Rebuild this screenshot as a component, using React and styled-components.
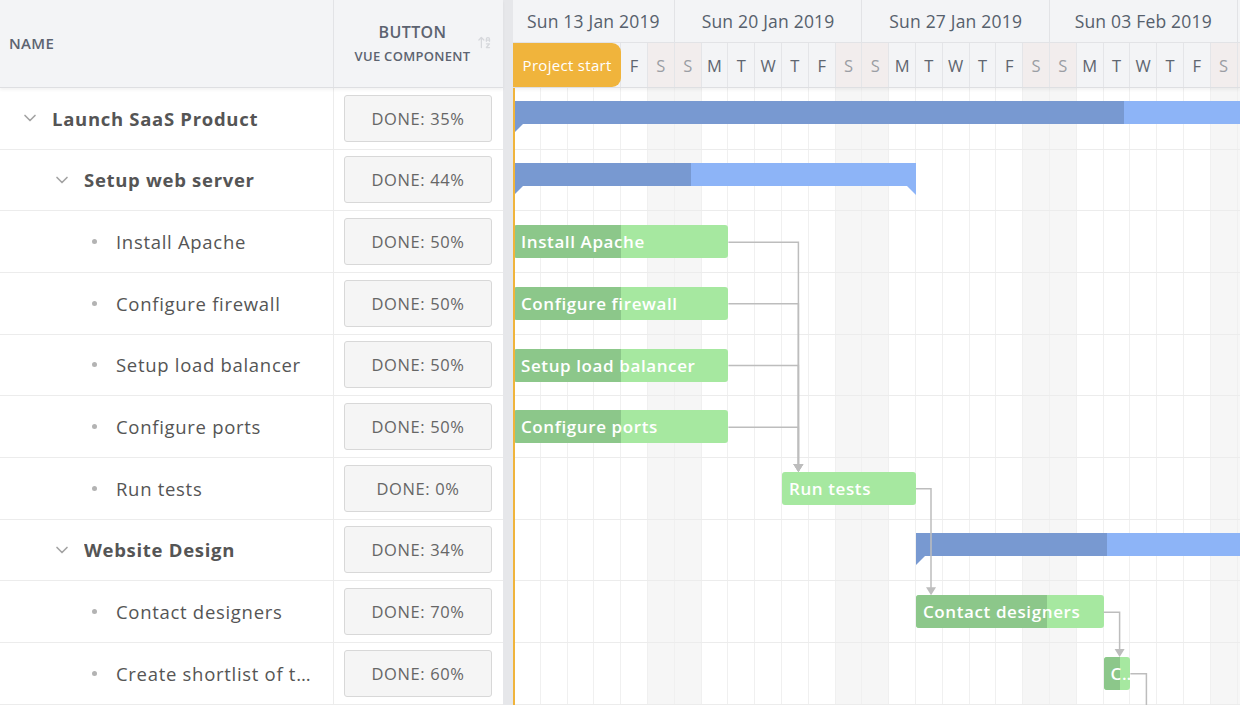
import React from 'react';
import styled, { createGlobalStyle } from 'styled-components';
import { ChevronDown, ArrowUpAZ } from 'lucide-react';

const DAY = 26.8;
const ORIGIN = 1;
const ROW_H = 61.67;
const START_DAYS = 4;

const rows = [
  { name: 'Launch SaaS Product', level: 0, parent: true, done: 35, start: 0, len: 65 },
  { name: 'Setup web server', level: 1, parent: true, done: 44, start: 0, len: 15 },
  { name: 'Install Apache', level: 2, done: 50, start: 0, len: 8 },
  { name: 'Configure firewall', level: 2, done: 50, start: 0, len: 8 },
  { name: 'Setup load balancer', level: 2, done: 50, start: 0, len: 8 },
  { name: 'Configure ports', level: 2, done: 50, start: 0, len: 8 },
  { name: 'Run tests', level: 2, done: 0, start: 10, len: 5 },
  { name: 'Website Design', level: 1, parent: true, done: 34, start: 15, len: 21 },
  { name: 'Contact designers', level: 2, done: 70, start: 15, len: 7 },
  { name: 'Create shortlist of three designers', level: 2, done: 60, start: 22, len: 1 },
];

const weeks = [
  { label: 'Sun 13 Jan 2019', width: ORIGIN + 6 * DAY },
  { label: 'Sun 20 Jan 2019', width: 7 * DAY },
  { label: 'Sun 27 Jan 2019', width: 7 * DAY },
  { label: 'Sun 03 Feb 2019', width: 7 * DAY },
];

const letters = ['M', 'T', 'W', 'T', 'F', 'S', 'S'];
const days = Array.from({ length: 28 }, (_, i) => ({
  letter: letters[i % 7],
  weekend: i % 7 >= 5,
}));

const x = (d) => ORIGIN + d * DAY;
const rowMid = (i) => i * ROW_H + ROW_H / 2;

const GlobalStyle = createGlobalStyle`
  html, body {
    margin: 0;
    padding: 0;
    overflow: hidden;
    background: #fff;
  }
  body {
    font-family: "Open Sans", "Noto Sans", sans-serif;
  }
  * { box-sizing: border-box; }
`;

const Page = styled.div`
  display: flex;
  width: 1240px;
  height: 705px;
  overflow: hidden;
  background: #fff;
`;

const Grid = styled.div`
  width: 503px;
  flex-shrink: 0;
  display: flex;
  flex-direction: column;
`;

const GridHeader = styled.div`
  height: 88px;
  display: flex;
  background: #f3f4f6;
  border-bottom: 1px solid #dedfe2;
  box-shadow: 0 2px 3px rgba(0, 0, 0, 0.05);
  position: relative;
  z-index: 2;
`;

const HeadCell = styled.div`
  width: ${(p) => p.$w}px;
  flex-shrink: 0;
  display: flex;
  flex-direction: column;
  justify-content: center;
  align-items: ${(p) => (p.$center ? 'center' : 'flex-start')};
  padding-left: ${(p) => (p.$center ? 0 : 9)}px;
  padding-right: ${(p) => (p.$center ? 12 : 0)}px;
  border-right: ${(p) => (p.$divider ? '1px solid #e2e3e6' : 'none')};
  color: #5c6370;
  font-weight: 600;
  text-transform: uppercase;
  position: relative;
`;

const HeadTitle = styled.span`
  font-size: ${(p) => p.$size}px;
  letter-spacing: ${(p) => p.$ls || 0}px;
  line-height: 1;
  margin: ${(p) => p.$gap || 0}px 0 0;
`;

const SortIcon = styled.div`
  position: absolute;
  right: 11px;
  top: 35px;
  color: #d6d8dc;
  display: flex;
`;

const GridRow = styled.div`
  height: ${ROW_H}px;
  display: flex;
  border-bottom: 1px solid #ececec;
`;

const NameCell = styled.div`
  width: 334px;
  flex-shrink: 0;
  display: flex;
  align-items: center;
  gap: 12px;
  padding-left: ${(p) => 20 + p.$level * 32}px;
  padding-right: 14px;
  border-right: 1px solid #ececec;
  min-width: 0;
`;

const TreeIcon = styled.div`
  width: 20px;
  flex-shrink: 0;
  display: flex;
  justify-content: center;
  align-items: center;
  color: #a3a3a3;
`;

const Dot = styled.span`
  width: 5px;
  height: 5px;
  border-radius: 50%;
  background: #b3b3b3;
`;

const NameText = styled.span`
  font-size: 18.5px;
  letter-spacing: 0.7px;
  font-weight: ${(p) => (p.$bold ? 700 : 400)};
  color: #555;
  white-space: nowrap;
  overflow: hidden;
  text-overflow: ellipsis;
  min-width: 0;
`;

const ButtonCell = styled.div`
  flex: 1;
  display: flex;
  align-items: center;
  padding: 0 11px 0 10px;
`;

const DoneButton = styled.button`
  width: 100%;
  height: 47px;
  background: #f5f5f5;
  border: 1px solid #d8d8d8;
  border-radius: 3px;
  font-family: inherit;
  font-size: 16.5px;
  letter-spacing: 0.6px;
  color: #666;
  cursor: pointer;
`;

const Splitter = styled.div`
  width: 10px;
  flex-shrink: 0;
  background: #e6e7ea;
`;

const Timeline = styled.div`
  flex: 1;
  min-width: 0;
  display: flex;
  flex-direction: column;
  overflow: hidden;
`;

const TimeHeader = styled.div`
  height: 88px;
  flex-shrink: 0;
  background: #f3f4f6;
  border-bottom: 1px solid #dedfe2;
  box-shadow: 0 2px 3px rgba(0, 0, 0, 0.05);
  display: flex;
  flex-direction: column;
  position: relative;
  z-index: 2;
`;

const WeekRow = styled.div`
  height: 43px;
  display: flex;
  border-bottom: 1px solid #e2e3e6;
`;

const WeekCell = styled.div`
  width: ${(p) => p.$w}px;
  flex-shrink: 0;
  display: flex;
  align-items: center;
  justify-content: center;
  border-right: 1px solid #e2e3e6;
  font-size: 17.5px;
  letter-spacing: 0.2px;
  font-weight: 500;
  color: #56606c;
  white-space: nowrap;
`;

const DayRow = styled.div`
  flex: 1;
  display: flex;
  position: relative;
`;

const DayCell = styled.div`
  width: ${(p) => p.$w}px;
  flex-shrink: 0;
  display: flex;
  align-items: center;
  justify-content: center;
  border-right: 1px solid #e4e5e8;
  background: ${(p) => (p.$weekend ? '#f2eded' : 'transparent')};
  color: ${(p) => (p.$weekend ? '#9b9ea4' : '#5f6670')};
  font-size: 16.5px;
  font-weight: 500;
`;

const ProjectStart = styled.div`
  position: absolute;
  left: 0;
  top: 0;
  bottom: 0;
  width: ${ORIGIN + START_DAYS * DAY}px;
  background: #f0b43c;
  border-radius: 0 9px 9px 0;
  color: #fff;
  font-size: 15px;
  letter-spacing: 0.3px;
  font-weight: 500;
  display: flex;
  align-items: center;
  justify-content: center;
`;

const TimeBody = styled.div`
  flex: 1;
  position: relative;
`;

const Columns = styled.div`
  position: absolute;
  inset: 0;
  display: flex;
`;

const DayCol = styled.div`
  width: ${(p) => p.$w}px;
  flex-shrink: 0;
  border-right: 1px solid #f0f0f0;
  background: ${(p) => (p.$weekend ? '#f6f6f6' : 'transparent')};
`;

const TimeRow = styled.div`
  height: ${ROW_H}px;
  border-bottom: 1px solid #ececec;
  position: relative;
`;

const SummaryBar = styled.div`
  position: absolute;
  top: 13px;
  height: 23px;
  background: #8db4f7;
  overflow: visible;
`;

const SummaryDone = styled.div`
  height: 100%;
  background: #7899d1;
`;

const Flag = styled.div`
  position: absolute;
  top: 23px;
  width: 0;
  height: 0;
  border-style: solid;
  ${(p) =>
    p.$side === 'left'
      ? `left: 0; border-width: 9px 9px 0 0; border-color: ${p.$color} transparent transparent transparent;`
      : `right: 0; border-width: 0 9px 9px 0; border-color: transparent ${p.$color} transparent transparent;`}
`;

const TaskBar = styled.div`
  position: absolute;
  top: 14px;
  height: 33px;
  border-radius: 3px;
  background: #a6e8a0;
  overflow: hidden;
`;

const TaskDone = styled.div`
  position: absolute;
  left: 0;
  top: 0;
  bottom: 0;
  background: #8cc78a;
`;

const TaskLabel = styled.span`
  position: relative;
  display: block;
  padding: 0 1px 0 7px;
  line-height: 33px;
  color: #fff;
  font-size: 17px;
  letter-spacing: 0.6px;
  font-weight: 600;
  white-space: nowrap;
  overflow: hidden;
  text-overflow: ellipsis;
`;

const StartLine = styled.div`
  position: absolute;
  left: 0;
  top: 0;
  bottom: 0;
  width: 2px;
  background: #f0b43c;
  z-index: 3;
`;

const Deps = styled.svg`
  position: absolute;
  left: 0;
  top: 0;
  width: 100%;
  height: 100%;
  pointer-events: none;
  overflow: visible;
`;

function Dependency({ from, to, stub = 15 }) {
  const a = rows[from];
  const x1 = x(a.start + a.len);
  const y1 = rowMid(from);
  const x2 = x1 + stub;
  const tipY = to * ROW_H + 14;
  const d = `M${x1} ${y1} H${x2} V${tipY - 7}`;
  return (
    <g>
      <path d={d} fill="none" stroke="#bdbdbd" strokeWidth="1.5" />
      <polygon points={`${x2 - 5},${tipY - 8} ${x2 + 5},${tipY - 8} ${x2},${tipY}`} fill="#bdbdbd" />
    </g>
  );
}

export default function App() {
  return (
    <>
      <GlobalStyle />
      <Page>
        <Grid>
          <GridHeader>
            <HeadCell $w={334} $divider>
              <HeadTitle $size={15} $ls={0.3}>Name</HeadTitle>
            </HeadCell>
            <HeadCell $w={169} $center>
              <HeadTitle $size={16} $ls={0.4}>Button</HeadTitle>
              <HeadTitle $size={13} $ls={0.3} $gap={10}>Vue Component</HeadTitle>
              <SortIcon>
                <ArrowUpAZ size={15} strokeWidth={2} />
              </SortIcon>
            </HeadCell>
          </GridHeader>
          {rows.map((r) => (
            <GridRow key={r.name}>
              <NameCell $level={r.level}>
                <TreeIcon>{r.parent ? <ChevronDown size={22} strokeWidth={2} /> : <Dot />}</TreeIcon>
                <NameText $bold={r.parent}>{r.name}</NameText>
              </NameCell>
              <ButtonCell>
                <DoneButton>DONE: {r.done}%</DoneButton>
              </ButtonCell>
            </GridRow>
          ))}
        </Grid>
        <Splitter />
        <Timeline>
          <TimeHeader>
            <WeekRow>
              {weeks.map((w) => (
                <WeekCell key={w.label} $w={w.width}>{w.label}</WeekCell>
              ))}
            </WeekRow>
            <DayRow>
              <DayCell $w={ORIGIN} $weekend />
              {days.map((d, i) => (
                <DayCell key={i} $w={DAY} $weekend={d.weekend}>
                  {i >= START_DAYS ? d.letter : ''}
                </DayCell>
              ))}
              <ProjectStart>Project start</ProjectStart>
            </DayRow>
          </TimeHeader>
          <TimeBody>
            <Columns>
              <DayCol $w={ORIGIN} $weekend />
              {days.map((d, i) => (
                <DayCol key={i} $w={DAY} $weekend={d.weekend} />
              ))}
            </Columns>
            {rows.map((r) => {
              const left = x(r.start);
              const width = r.len * DAY;
              return (
                <TimeRow key={r.name}>
                  {r.parent ? (
                    <SummaryBar style={{ left, width }}>
                      <SummaryDone style={{ width: `${r.done}%` }} />
                      <Flag $side="left" $color="#7899d1" />
                      <Flag $side="right" $color="#8db4f7" />
                    </SummaryBar>
                  ) : (
                    <TaskBar style={{ left, width }}>
                      <TaskDone style={{ width: `${r.done}%` }} />
                      <TaskLabel>{r.name}</TaskLabel>
                    </TaskBar>
                  )}
                </TimeRow>
              );
            })}
            <Deps>
              <Dependency from={2} to={6} stub={70} />
              <Dependency from={3} to={6} stub={70} />
              <Dependency from={4} to={6} stub={70} />
              <Dependency from={5} to={6} stub={70} />
              <Dependency from={6} to={8} stub={15} />
              <Dependency from={8} to={9} stub={16} />
              <path d={`M${x(23)} ${rowMid(9)} H${x(23) + 16} V${10 * ROW_H + 20}`} fill="none" stroke="#bdbdbd" strokeWidth="1.5" />
            </Deps>
            <StartLine />
          </TimeBody>
        </Timeline>
      </Page>
    </>
  );
}
